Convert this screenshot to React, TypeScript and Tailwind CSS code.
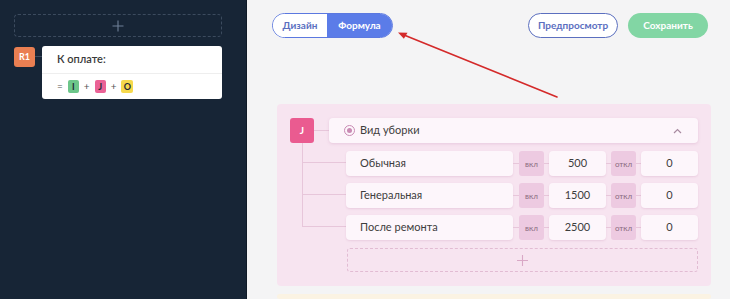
import React from "react";

const font = { fontFamily: "Lato, Inter, 'Noto Sans', sans-serif" };

type Option = { label: string; on: string; off: string };

const options: Option[] = [
  { label: "Обычная", on: "500", off: "0" },
  { label: "Генеральная", on: "1500", off: "0" },
  { label: "После ремонта", on: "2500", off: "0" },
];

function Chip({ letter, cls }: { letter: string; cls: string }) {
  return (
    <span
      className={
        "inline-flex h-[13px] w-[11px] items-center justify-center rounded-[2px] text-[9px] font-bold text-[#1f2937] " +
        cls
      }
    >
      {letter}
    </span>
  );
}

function Sidebar() {
  return (
    <aside className="flex h-full w-[247px] shrink-0 flex-col border-r border-[#0f1a27] bg-[#172536] pl-[14px] pr-[24px] pt-[14px]">
      <div className="flex h-[23px] items-center justify-center rounded-[4px] border border-dashed border-[#3c4b5e]">
        <svg width="12" height="12" viewBox="0 0 12 12" className="text-[#6f8097]">
          <path d="M6 0.5v11M0.5 6h11" stroke="currentColor" strokeWidth="1.1" />
        </svg>
      </div>
      <div className="mt-[9px] flex items-start">
        <div className="mt-px flex h-[20px] w-[21px] items-center justify-center rounded-[3px] bg-[#ea7f52] text-[9px] font-bold text-white">
          R1
        </div>
        <div className="mt-[10px] h-px w-[7px] bg-[#3c4b5e]" />
        <div className="flex-1 rounded-[3px] bg-white">
          <div className="flex h-[28px] items-center border-b border-[#eeeeee] pl-[15px] text-[11px] font-semibold text-[#3a3a3a]">
            К оплате:
          </div>
          <div className="flex h-[25px] items-center gap-[5px] pl-[15px] text-[10px] text-[#555]">
            <span>=</span>
            <Chip letter="I" cls="bg-[#6cc68a]" />
            <span>+</span>
            <Chip letter="J" cls="bg-[#ea6296]" />
            <span>+</span>
            <Chip letter="O" cls="bg-[#f6d94c] w-[12px]" />
          </div>
        </div>
      </div>
    </aside>
  );
}

function Header() {
  return (
    <div className="flex h-[25px] items-center justify-between pl-[25px] pr-[22px]">
      <div className="flex h-[25px] overflow-hidden rounded-full border border-[#5b78e0] text-[10px] font-bold">
        <div className="flex w-[54px] items-center justify-center bg-white text-[#5b6fbf]">
          Дизайн
        </div>
        <div className="flex w-[65px] items-center justify-center bg-[#5b7ce8] text-white">
          Формула
        </div>
      </div>
      <div className="flex items-center gap-[10px] text-[10px] font-bold">
        <div className="flex h-[25px] w-[90px] items-center justify-center rounded-full border border-[#5b6fbf] bg-white text-[#5b6fbf]">
          Предпросмотр
        </div>
        <div className="flex h-[25px] w-[80px] items-center justify-center rounded-full bg-[#82d6a4] text-white">
          Сохранить
        </div>
      </div>
    </div>
  );
}

function OptionRow({ o, first, last }: { o: Option; first: boolean; last: boolean }) {
  return (
    <div className="flex">
      <div className="flex w-[44px] shrink-0 flex-col">
        <div
          className={
            "border-b border-l border-[#e7c6da] " + (first ? "h-[20px]" : "h-[19px]")
          }
        />
        <div className={"flex-1 " + (last ? "" : "border-l border-[#e7c6da]")} />
      </div>
      <div className={"flex flex-1 items-center " + (first ? "pt-[8px]" : "pt-[7px]")}>
        <div className="flex h-[25px] w-[167px] items-center rounded-[4px] bg-[#fdf6fb] pl-[14px] text-[11px] text-[#3d3d3d] shadow-[0_1px_2px_rgba(200,140,180,0.25)]">
          {o.label}
        </div>
        <div className="h-px w-[6px] bg-[#e7c6da]" />
        <div className="flex h-[25px] w-[25px] items-center justify-center rounded-[3px] bg-[#edcae1] text-[8px] text-[#8a6b80]">
          вкл
        </div>
        <div className="h-px w-[5px] bg-[#e7c6da]" />
        <div className="flex h-[25px] w-[57px] items-center justify-center rounded-[4px] bg-[#fdf6fb] text-[11px] text-[#3d3d3d] shadow-[0_1px_2px_rgba(200,140,180,0.25)]">
          {o.on}
        </div>
        <div className="h-px w-[5px] bg-[#e7c6da]" />
        <div className="flex h-[25px] w-[25px] items-center justify-center rounded-[3px] bg-[#edcae1] text-[8px] text-[#8a6b80]">
          откл
        </div>
        <div className="h-px w-[5px] bg-[#e7c6da]" />
        <div className="flex h-[25px] w-[57px] items-center justify-center rounded-[4px] bg-[#fdf6fb] text-[11px] text-[#3d3d3d] shadow-[0_1px_2px_rgba(200,140,180,0.25)]">
          {o.off}
        </div>
      </div>
    </div>
  );
}

function FormulaBlock() {
  return (
    <div className="ml-[30px] mr-[19px] mt-[66px] rounded-[4px] bg-[#f7e4f0] pb-[14px] pl-[13px] pr-[13px] pt-[14px]">
      <div className="flex items-center">
        <div className="flex h-[25px] w-[24px] items-center justify-center rounded-[3px] bg-[#ea5b90] text-[10px] font-bold text-white">
          J
        </div>
        <div className="h-px w-[15px] bg-[#e7c6da]" />
        <div className="flex h-[25px] flex-1 items-center rounded-[4px] bg-[#fdf6fb] pl-[15px] pr-[16px] text-[11px] text-[#3d3d3d] shadow-[0_1px_3px_rgba(200,140,180,0.3)]">
          <span className="flex h-[11px] w-[11px] items-center justify-center rounded-full border border-[#c98bb4]">
            <span className="h-[5px] w-[5px] rounded-full bg-[#c98bb4]" />
          </span>
          <span className="ml-[5px]">Вид уборки</span>
          <svg width="9" height="6" viewBox="0 0 9 6" className="ml-auto text-[#a88aa0]">
            <path d="M1 5l3.5-3.5L8 5" fill="none" stroke="currentColor" strokeWidth="1.2" />
          </svg>
        </div>
      </div>
      <div className="ml-[12px]">
        {options.map((o, i) => (
          <OptionRow key={o.label} o={o} first={i === 0} last={i === options.length - 1} />
        ))}
        <div className="ml-[45px] mt-[8px] flex h-[24px] items-center justify-center rounded-[3px] border border-dashed border-[#e2bcd3]">
          <svg width="11" height="11" viewBox="0 0 11 11" className="text-[#d9a8c6]">
            <path d="M5.5 0v11M0 5.5h11" stroke="currentColor" strokeWidth="1.1" />
          </svg>
        </div>
      </div>
    </div>
  );
}

export default function App() {
  return (
    <div className="relative flex h-[299px] w-[730px] overflow-hidden" style={font}>
      <Sidebar />
      <main className="flex flex-1 flex-col bg-[#f4f4f5] pt-[13px]">
        <Header />
        <FormulaBlock />
        <div className="ml-[30px] mr-[19px] mt-[8px] h-[20px] rounded-[4px] bg-[#fbf3e3]" />
      </main>
      <svg
        className="pointer-events-none absolute left-0 top-0"
        width="730"
        height="299"
        viewBox="0 0 730 299"
      >
        <line x1="557" y1="97" x2="404" y2="35" stroke="#d42a2a" strokeWidth="1.6" strokeLinecap="round" />
        <path d="M398 32.5l9.5 0.3-3.6 6z" fill="#d42a2a" />
      </svg>
    </div>
  );
}
